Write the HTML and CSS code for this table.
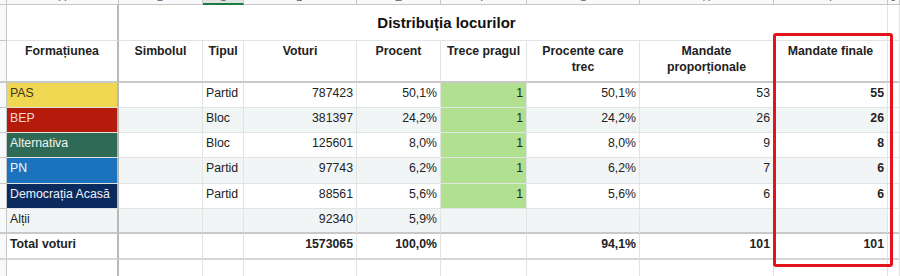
FILE: index.html
```html
<!DOCTYPE html>
<html lang="ro">
<head>
<meta charset="utf-8">
<title>Distribuția locurilor</title>
<link rel="stylesheet" href="styles.css">
</head>
<body>
<div class="sheet">
  <div class="grid">
    <!-- column letters row -->
    <div class="ch corner"></div>
    <div class="ch"><span>A</span></div>
    <div class="ch"><span>B</span></div>
    <div class="ch sel"><span>C</span></div>
    <div class="ch"><span>D</span></div>
    <div class="ch"><span>E</span></div>
    <div class="ch"><span>F</span></div>
    <div class="ch"><span>G</span></div>
    <div class="ch"><span>H</span></div>
    <div class="ch"><span>I</span></div>
    <div class="ch"><span>J</span></div>

    <!-- title row -->
    <div class="rh"></div>
    <div class="c fz"></div>
    <div class="c title">Distribuția locurilor</div>
    <div class="c"></div>

    <!-- header row -->
    <div class="rh hb"></div>
    <div class="c h fz">Formațiunea</div>
    <div class="c h">Simbolul</div>
    <div class="c h">Tipul</div>
    <div class="c h">Voturi</div>
    <div class="c h">Procent</div>
    <div class="c h">Trece pragul</div>
    <div class="c h">Procente care<br>trec</div>
    <div class="c h">Mandate<br>proporționale</div>
    <div class="c h">Mandate finale</div>
    <div class="c hb"></div>

    <!-- PAS -->
    <div class="rh"></div>
    <div class="c fz pas">PAS</div>
    <div class="c"></div>
    <div class="c">Partid</div>
    <div class="c r">787423</div>
    <div class="c r">50,1%</div>
    <div class="c r ok">1</div>
    <div class="c r">50,1%</div>
    <div class="c r">53</div>
    <div class="c r b">55</div>
    <div class="c"></div>

    <!-- BEP -->
    <div class="rh"></div>
    <div class="c fz bep">BEP</div>
    <div class="c band"></div>
    <div class="c band">Bloc</div>
    <div class="c r band">381397</div>
    <div class="c r band">24,2%</div>
    <div class="c r ok">1</div>
    <div class="c r band">24,2%</div>
    <div class="c r band">26</div>
    <div class="c r b band">26</div>
    <div class="c"></div>

    <!-- Alternativa -->
    <div class="rh"></div>
    <div class="c fz alt">Alternativa</div>
    <div class="c"></div>
    <div class="c">Bloc</div>
    <div class="c r">125601</div>
    <div class="c r">8,0%</div>
    <div class="c r ok">1</div>
    <div class="c r">8,0%</div>
    <div class="c r">9</div>
    <div class="c r b">8</div>
    <div class="c"></div>

    <!-- PN -->
    <div class="rh"></div>
    <div class="c fz pn">PN</div>
    <div class="c band"></div>
    <div class="c band">Partid</div>
    <div class="c r band">97743</div>
    <div class="c r band">6,2%</div>
    <div class="c r ok">1</div>
    <div class="c r band">6,2%</div>
    <div class="c r band">7</div>
    <div class="c r b band">6</div>
    <div class="c"></div>

    <!-- Democratia Acasa -->
    <div class="rh"></div>
    <div class="c fz da">Democrația Acasă</div>
    <div class="c"></div>
    <div class="c">Partid</div>
    <div class="c r">88561</div>
    <div class="c r">5,6%</div>
    <div class="c r ok">1</div>
    <div class="c r">5,6%</div>
    <div class="c r">6</div>
    <div class="c r b">6</div>
    <div class="c"></div>

    <!-- Altii -->
    <div class="rh tb"></div>
    <div class="c fz band tb">Alții</div>
    <div class="c band tb"></div>
    <div class="c band tb"></div>
    <div class="c r band tb">92340</div>
    <div class="c r band tb">5,9%</div>
    <div class="c band tb"></div>
    <div class="c band tb"></div>
    <div class="c band tb"></div>
    <div class="c band tb"></div>
    <div class="c tb"></div>

    <!-- Total -->
    <div class="rh tb2"></div>
    <div class="c fz b tb2">Total voturi</div>
    <div class="c tb2"></div>
    <div class="c tb2"></div>
    <div class="c r b tb2">1573065</div>
    <div class="c r b tb2">100,0%</div>
    <div class="c tb2"></div>
    <div class="c r b tb2">94,1%</div>
    <div class="c r b tb2">101</div>
    <div class="c r b tb2">101</div>
    <div class="c tb2"></div>

    <!-- blank -->
    <div class="rh"></div>
    <div class="c fz"></div>
    <div class="c"></div>
    <div class="c"></div>
    <div class="c"></div>
    <div class="c"></div>
    <div class="c"></div>
    <div class="c"></div>
    <div class="c"></div>
    <div class="c"></div>
    <div class="c"></div>
  </div>
  <div class="highlight"></div>
</div>
</body>
</html>
```

FILE: styles.css
```css
* { box-sizing: border-box; }

html, body {
  margin: 0;
  padding: 0;
  background: #ffffff;
}

body {
  width: 900px;
  height: 276px;
  overflow: hidden;
  font-family: "Liberation Sans", Arial, sans-serif;
  font-size: 12.3px;
  color: #222222;
}

.sheet {
  position: relative;
  width: 900px;
  height: 276px;
}

.grid {
  display: grid;
  grid-template-columns: 7px 112px 84px 41px 113px 84px 86px 113px 134px 114px 12px;
  grid-template-rows: 5px 36px 42px 25px 25px 25px 26px 25px 25px 26px 20px;
}

/* column letter header */
.ch {
  background: #f8f9fa;
  border-right: 1px solid #c7c7c7;
  border-bottom: 1px solid #c7c7c7;
  overflow: hidden;
  text-align: center;
  font-size: 11px;
  color: #5f6368;
  line-height: 12px;
}
.ch span {
  display: block;
  margin-top: -9px;
}
.ch.sel {
  background: #dfe4e1;
  border-bottom: 2px solid #1e7a45;
}

/* row header */
.rh {
  background: #f8f9fa;
  border-right: 1px solid #c7c7c7;
  border-bottom: 1px solid #c7c7c7;
}

/* cells */
.c {
  border-right: 1px solid #e2e3e3;
  border-bottom: 1px solid #e2e3e3;
  padding: 2px 3px 0 3px;
  line-height: 16px;
  white-space: nowrap;
  overflow: hidden;
}

.fz {
  border-right: 2px solid #b8b8b8;
}

.title {
  grid-column: 3 / 11;
  display: flex;
  align-items: center;
  justify-content: center;
  padding: 0 113px 0 0;
  font-size: 15px;
  font-weight: bold;
  color: #111111;
}

.h {
  font-weight: bold;
  text-align: center;
  color: #222222;
  border-bottom: 2px solid #c9c9c9;
}
.hb { border-bottom: 2px solid #c9c9c9; }

.r { text-align: right; }
.b { font-weight: bold; }

.band { background: #f2f5f5; }
.ok { background: #b0e090; }

.tb { border-bottom: 2px solid #c9c9c9; }
.tb2 { border-bottom: 2px solid #d6d6d6; }

.pas { background: #f0d752; color: #3b3520; }
.bep { background: #b41b0b; color: #f6d9d2; }
.alt { background: #2f6a56; color: #f0f4f2; }
.pn  { background: #1b73be; color: #f2f7fc; }
.da  { background: #0b2b5e; color: #eef2f8; }

/* red annotation rectangle drawn over the sheet */
.highlight {
  position: absolute;
  left: 773px;
  top: 33px;
  width: 120px;
  height: 234px;
  border: 3px solid #e3141c;
  border-radius: 3px;
  pointer-events: none;
}
```
